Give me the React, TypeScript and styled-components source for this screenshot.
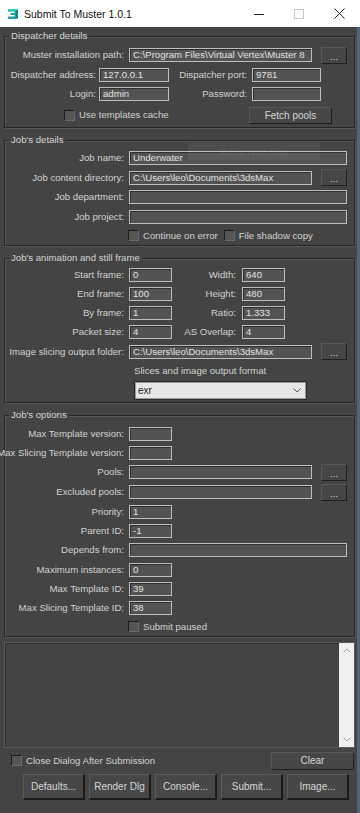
import React from "react";
import styled, { createGlobalStyle } from "styled-components";

const Global = createGlobalStyle`
  html, body { margin: 0; padding: 0; }
  body {
    width: 360px; height: 813px; overflow: hidden;
    background: #4f6579;
    font-family: "Liberation Sans", Arial, sans-serif;
  }
`;

const Page = styled.div`
  width: 360px;
  height: 813px;
  display: flex;
  flex-direction: column;
`;

const TitleBar = styled.div`
  height: 27px;
  background: #ffffff;
  display: flex;
  align-items: center;
  padding-left: 7px;
  flex: 0 0 auto;
`;

const TitleText = styled.span`
  margin-left: 5px;
  font-size: 10.5px;
  color: #111;
  flex: 1;
`;

const TitleBtns = styled.div`
  display: flex;
  height: 27px;
  margin-right: 1px;
`;

const TitleBtn = styled.div`
  width: 40px;
  height: 27px;
  display: flex;
  align-items: center;
  justify-content: center;
`;

const Body = styled.div`
  width: 357px;
  flex: 1;
  background: #444444;
  display: flex;
  flex-direction: column;
`;

const Group = styled.div<{ $mt: number; $pt: number; $pb: number }>`
  position: relative;
  margin: ${(p) => p.$mt}px 0 0 4px;
  width: 351px;
  box-sizing: border-box;
  border: 1px solid #262626;
  box-shadow: inset 1px 1px 0 #565656, 1px 1px 0 #565656;
  padding: ${(p) => p.$pt}px 0 ${(p) => p.$pb}px 0;
`;

const Legend = styled.span`
  position: absolute;
  top: -7px;
  left: 4px;
  padding: 0 2px;
  background: #444444;
  color: #d4d4d4;
  font-size: 9.6px;
  line-height: 12px;
  white-space: nowrap;
`;

const Row = styled.div<{ $h: number }>`
  display: flex;
  align-items: center;
  height: ${(p) => p.$h}px;
`;

const Label = styled.div<{ $w: number; $mr: number }>`
  flex: 0 0 ${(p) => p.$w}px;
  width: ${(p) => p.$w}px;
  min-width: 0;
  margin-right: ${(p) => p.$mr}px;
  display: flex;
  justify-content: flex-end;
  white-space: nowrap;
  color: #d2d2d2;
  font-size: 9.6px;
  line-height: 12px;
`;

const Field = styled.div<{ $w: number }>`
  flex: 0 0 ${(p) => p.$w}px;
  height: 14px;
  box-sizing: border-box;
  border: 1px solid #bdbdbd;
  box-shadow: inset 1px 1px 0 #2f2f2f;
  background: #535353;
  color: #e2e2e2;
  font-size: 9.6px;
  line-height: 12px;
  padding-left: 3px;
  overflow: hidden;
  white-space: nowrap;
`;

const DotsButton = styled.div`
  flex: 0 0 26px;
  height: 17px;
  margin-left: 9px;
  box-sizing: border-box;
  border: 1px solid;
  border-color: #575757 #202020 #202020 #575757;
  background: #464646;
  color: #c9d2e0;
  font-size: 9.6px;
  line-height: 17px;
  text-align: center;
`;

const PushButton = styled.div<{ $w: number; $h: number }>`
  flex: 0 0 ${(p) => p.$w}px;
  height: ${(p) => p.$h}px;
  box-sizing: border-box;
  border: 1px solid;
  border-color: #585858 #1e1e1e #1e1e1e #585858;
  background: #474747;
  color: #d6d6d6;
  font-size: 10px;
  display: flex;
  align-items: center;
  justify-content: center;
  white-space: nowrap;
`;

const FetchButton = styled(PushButton)`
  margin-left: auto;
  margin-right: 22px;
`;

const CheckItem = styled.div<{ $ml: number }>`
  display: flex;
  align-items: center;
  gap: 4px;
  margin-left: ${(p) => p.$ml}px;
  color: #d2d2d2;
  font-size: 9.6px;
  line-height: 12px;
  white-space: nowrap;
`;

const Box = styled.span`
  width: 11px;
  height: 11px;
  box-sizing: border-box;
  border: 1px solid;
  border-color: #1c1c1c #6a6a6a #6a6a6a #1c1c1c;
  background: #555555;
  flex: 0 0 auto;
`;

const Hint = styled.div`
  margin-left: 129px;
  color: #d2d2d2;
  font-size: 9.6px;
  line-height: 12px;
`;

const Select = styled.div`
  margin-left: 129px;
  width: 173px;
  height: 19px;
  box-sizing: border-box;
  border: 1px solid #2a2a2a;
  box-shadow: inset 0 0 0 1px #9a9a9a;
  background: #e6e6e6;
  color: #1a1a1a;
  font-size: 10px;
  display: flex;
  align-items: center;
  justify-content: space-between;
  padding: 0 5px 0 3px;
`;

const Snip = styled.div`
  position: absolute;
  left: 183px;
  top: 2px;
  width: 132px;
  height: 17px;
  background: rgba(255, 255, 255, 0.05);
  color: rgba(255, 255, 255, 0.1);
  font-size: 9.6px;
  display: flex;
  align-items: center;
  justify-content: center;
  white-space: nowrap;
`;

const LogBox = styled.div`
  margin: 5px 0 0 4px;
  width: 351px;
  height: 106px;
  box-sizing: border-box;
  border: 1px solid #5a5a5a;
  box-shadow: inset 1px 1px 0 #2e2e2e;
  background: #444444;
  display: flex;
  justify-content: flex-end;
`;

const ScrollBar = styled.div`
  width: 15px;
  height: 100%;
  background: #f0f0f0;
  display: flex;
  flex-direction: column;
  justify-content: space-between;
  align-items: center;
  padding: 5px 0;
  box-sizing: border-box;
`;

const FooterRow = styled.div`
  display: flex;
  align-items: center;
  height: 21px;
  margin-top: 2px;
`;

const ClearButton = styled(PushButton)`
  margin-left: auto;
  margin-right: 3px;
`;

const ButtonBar = styled.div`
  display: flex;
  gap: 4px;
  margin: 3px 0 0 23px;
`;

const BigButton = styled(PushButton)`
  border-width: 1px 2px 2px 1px;
  border-color: #5a5a5a #1a1a1a #1a1a1a #5a5a5a;
`;

const Chevron = ({ up, color }: { up?: boolean; color: string }) => (
  <svg width="8" height="5" viewBox="0 0 8 5">
    <path d={up ? "M0.5 4.5 L4 1 L7.5 4.5" : "M0.5 0.5 L4 4 L7.5 0.5"} fill="none" stroke={color} strokeWidth="1" />
  </svg>
);

const AppIcon = () => (
  <svg width="12" height="12" viewBox="0 0 12 12">
    <path d="M1 1 H9.5 L11 2.5 V5 L10 6 L11 7 V9.5 L9.5 11 H1 V8.5 H7.5 V7 H3.5 V5 H7.5 V3.5 H1 Z" fill="#1aa3a8" />
    <path d="M9.5 1 L11 2.5 V5 L10 6 L11 7 V9.5 L9.5 11 V7.8 L8.8 6 L9.5 4.2 Z" fill="#0c6f78" />
    <path d="M1 1 H9.5 V3.5 H1 Z" fill="#2cc4c4" />
  </svg>
);

export default function App() {
  return (
    <>
      <Global />
      <Page>
        <TitleBar>
          <AppIcon />
          <TitleText>Submit To Muster 1.0.1</TitleText>
          <TitleBtns>
            <TitleBtn>
              <svg width="10" height="10" viewBox="0 0 10 10">
                <path d="M0 5.5 H10" stroke="#222" strokeWidth="1" />
              </svg>
            </TitleBtn>
            <TitleBtn>
              <svg width="10" height="10" viewBox="0 0 10 10">
                <rect x="0.5" y="0.5" width="9" height="9" fill="none" stroke="#c8c8c8" strokeWidth="1" />
              </svg>
            </TitleBtn>
            <TitleBtn>
              <svg width="11" height="11" viewBox="0 0 11 11">
                <path d="M0.5 0.5 L10.5 10.5 M10.5 0.5 L0.5 10.5" stroke="#222" strokeWidth="1" />
              </svg>
            </TitleBtn>
          </TitleBtns>
        </TitleBar>
        <Body>
          <Group $mt={9} $pt={8} $pb={1}>
            <Legend>Dispatcher details</Legend>
            <Row $h={20}>
              <Label $w={119} $mr={5}>Muster installation path:</Label>
              <Field $w={183}>C:\Program Files\Virtual Vertex\Muster 8</Field>
              <DotsButton>...</DotsButton>
            </Row>
            <Row $h={19}>
              <Label $w={91} $mr={3}>Dispatcher address:</Label>
              <Field $w={70}>127.0.0.1</Field>
              <Label $w={78} $mr={5}>Dispatcher port:</Label>
              <Field $w={69}>9781</Field>
            </Row>
            <Row $h={20}>
              <Label $w={91} $mr={3}>Login:</Label>
              <Field $w={70}>admin</Field>
              <Label $w={78} $mr={5}>Password:</Label>
              <Field $w={69}></Field>
            </Row>
            <Row $h={22}>
              <CheckItem $ml={59}>
                <Box />
                Use templates cache
              </CheckItem>
              <FetchButton $w={83} $h={17}>Fetch pools</FetchButton>
            </Row>
          </Group>

          <Group $mt={12} $pt={7} $pb={0}>
            <Legend>Job's details</Legend>
            <Snip>Full-screen Snip</Snip>
            <Row $h={20}>
              <Label $w={119} $mr={5}>Job name:</Label>
              <Field $w={218}>Underwater</Field>
            </Row>
            <Row $h={19}>
              <Label $w={119} $mr={5}>Job content directory:</Label>
              <Field $w={183}>C:\Users\leo\Documents\3dsMax</Field>
              <DotsButton>...</DotsButton>
            </Row>
            <Row $h={20}>
              <Label $w={119} $mr={5}>Job department:</Label>
              <Field $w={218}></Field>
            </Row>
            <Row $h={19}>
              <Label $w={119} $mr={5}>Job project:</Label>
              <Field $w={218}></Field>
            </Row>
            <Row $h={19}>
              <CheckItem $ml={123}>
                <Box />
                Continue on error
              </CheckItem>
              <CheckItem $ml={6}>
                <Box />
                File shadow copy
              </CheckItem>
            </Row>
          </Group>

          <Group $mt={12} $pt={6} $pb={2}>
            <Legend>Job's animation and still frame</Legend>
            <Row $h={19}>
              <Label $w={119} $mr={5}>Start frame:</Label>
              <Field $w={43}>0</Field>
              <Label $w={64} $mr={6}>Width:</Label>
              <Field $w={43}>640</Field>
            </Row>
            <Row $h={19}>
              <Label $w={119} $mr={5}>End frame:</Label>
              <Field $w={43}>100</Field>
              <Label $w={64} $mr={6}>Height:</Label>
              <Field $w={43}>480</Field>
            </Row>
            <Row $h={19}>
              <Label $w={119} $mr={5}>By frame:</Label>
              <Field $w={43}>1</Field>
              <Label $w={64} $mr={6}>Ratio:</Label>
              <Field $w={43}>1.333</Field>
            </Row>
            <Row $h={19}>
              <Label $w={119} $mr={5}>Packet size:</Label>
              <Field $w={43}>4</Field>
              <Label $w={64} $mr={6}>AS Overlap:</Label>
              <Field $w={43}>4</Field>
            </Row>
            <Row $h={21}>
              <Label $w={119} $mr={5}>Image slicing output folder:</Label>
              <Field $w={183}>C:\Users\leo\Documents\3dsMax</Field>
              <DotsButton>...</DotsButton>
            </Row>
            <Row $h={18}>
              <Hint>Slices and image output format</Hint>
            </Row>
            <Row $h={20}>
              <Select>
                <span>exr</span>
                <Chevron color="#555" />
              </Select>
            </Row>
          </Group>

          <Group $mt={12} $pt={8} $pb={0}>
            <Legend>Job's options</Legend>
            <Row $h={19}>
              <Label $w={119} $mr={5}>Max Template version:</Label>
              <Field $w={43}></Field>
            </Row>
            <Row $h={19}>
              <Label $w={119} $mr={5}>Max Slicing Template version:</Label>
              <Field $w={43}></Field>
            </Row>
            <Row $h={20}>
              <Label $w={119} $mr={5}>Pools:</Label>
              <Field $w={183}></Field>
              <DotsButton>...</DotsButton>
            </Row>
            <Row $h={20}>
              <Label $w={119} $mr={5}>Excluded pools:</Label>
              <Field $w={183}></Field>
              <DotsButton>...</DotsButton>
            </Row>
            <Row $h={19}>
              <Label $w={119} $mr={5}>Priority:</Label>
              <Field $w={43}>1</Field>
            </Row>
            <Row $h={19}>
              <Label $w={119} $mr={5}>Parent ID:</Label>
              <Field $w={43}>-1</Field>
            </Row>
            <Row $h={20}>
              <Label $w={119} $mr={5}>Depends from:</Label>
              <Field $w={218}></Field>
            </Row>
            <Row $h={19}>
              <Label $w={119} $mr={5}>Maximum instances:</Label>
              <Field $w={43}>0</Field>
            </Row>
            <Row $h={19}>
              <Label $w={119} $mr={5}>Max Template ID:</Label>
              <Field $w={43}>39</Field>
            </Row>
            <Row $h={19}>
              <Label $w={119} $mr={5}>Max Slicing Template ID:</Label>
              <Field $w={43}>38</Field>
            </Row>
            <Row $h={19}>
              <CheckItem $ml={123}>
                <Box />
                Submit paused
              </CheckItem>
            </Row>
          </Group>

          <LogBox>
            <ScrollBar>
              <Chevron up color="#a8a8a8" />
              <Chevron color="#a8a8a8" />
            </ScrollBar>
          </LogBox>

          <FooterRow>
            <CheckItem $ml={11}>
              <Box />
              Close Dialog After Submission
            </CheckItem>
            <ClearButton $w={83} $h={18}>Clear</ClearButton>
          </FooterRow>

          <ButtonBar>
            <BigButton $w={62} $h={26}>Defaults...</BigButton>
            <BigButton $w={62} $h={26}>Render Dlg</BigButton>
            <BigButton $w={62} $h={26}>Console...</BigButton>
            <BigButton $w={62} $h={26}>Submit...</BigButton>
            <BigButton $w={62} $h={26}>Image...</BigButton>
          </ButtonBar>
        </Body>
      </Page>
    </>
  );
}
